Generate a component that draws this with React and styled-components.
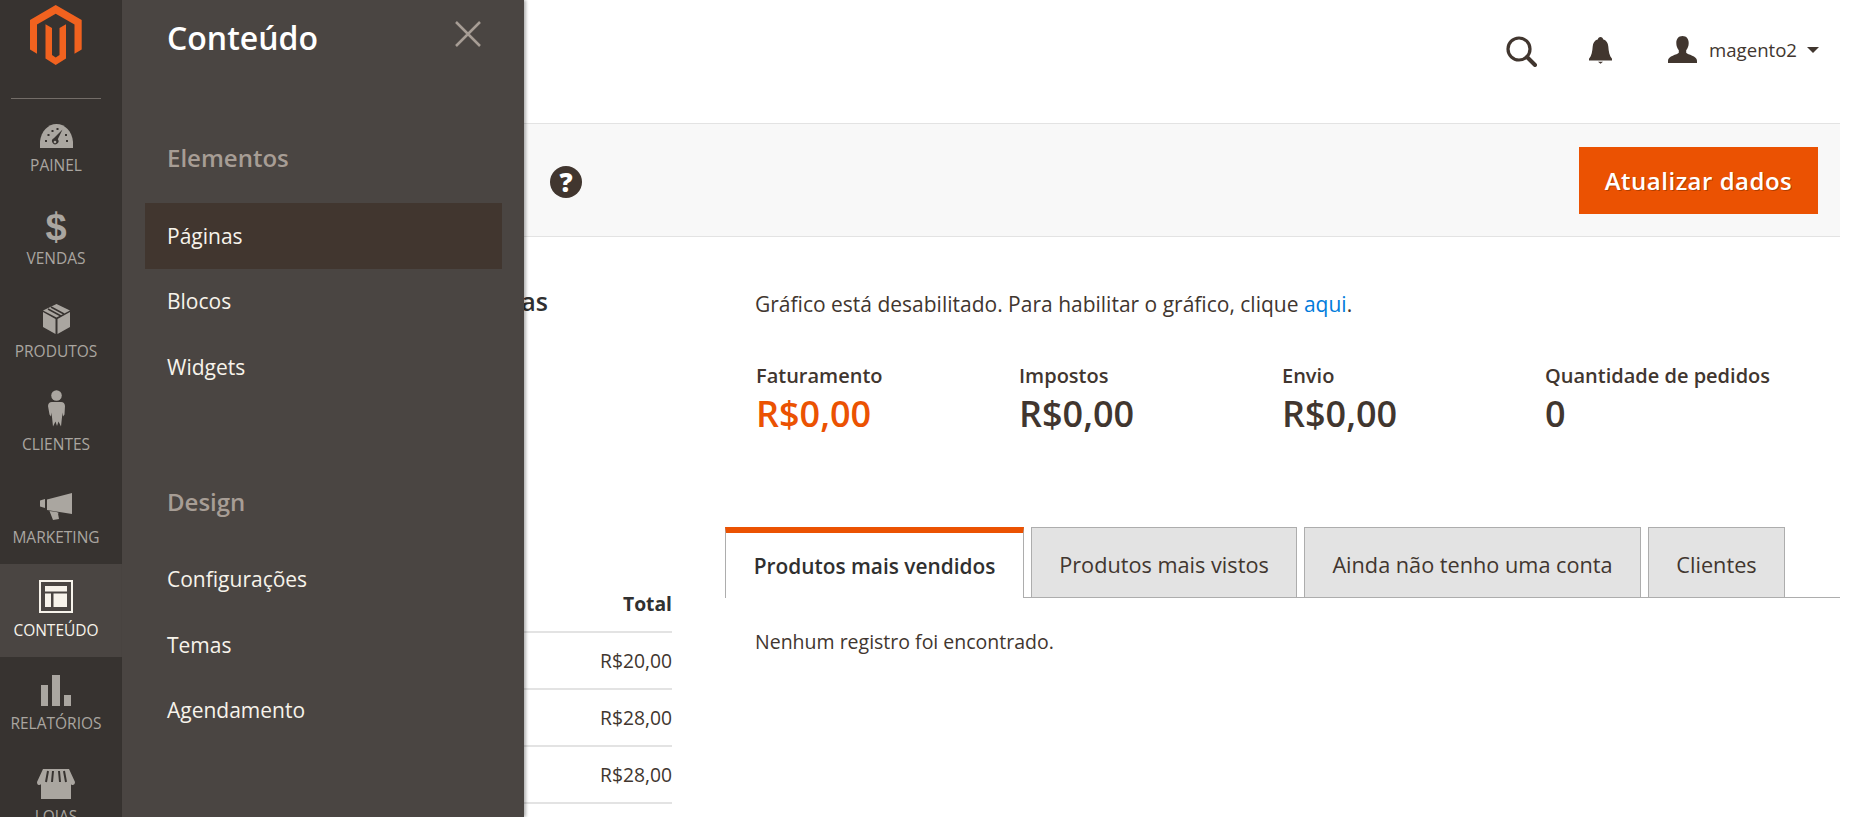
import React from 'react';
import styled, { createGlobalStyle } from 'styled-components';

const GlobalStyle = createGlobalStyle`
  html, body {
    margin: 0;
    padding: 0;
    height: 100%;
    overflow: hidden;
    background: #fff;
    font-family: "Open Sans", "Liberation Sans", sans-serif;
    color: #303030;
  }
  * { box-sizing: border-box; }
`;

const LogoIcon = () => (
  <svg width="52" height="60" viewBox="30 5 52 60">
    <path fill="#f1621f" d="M55.7 5 81.7 20v29.5l-7.2 4.2V24.5L55.7 13.7 37 24.5v29.2L30 49.5V20z" />
    <path fill="#f1621f" d="M45.5 24.3 52 28v27l3.7 2.5 3.8-2.5V28l6.5-3.7v34.2L55.7 65l-10.2-6.5z" />
  </svg>
);

const GaugeIcon = () => (
  <svg width="33" height="24" viewBox="0 0 33 24">
    <path fill="currentColor" d="M0 24v-6.500C1 7.500 8 0 16.500 0S32 7.500 33 17.500V24z" />
    <path fill="#373330" d="M22.500 5.500 17.800 15.200a3.200 3.200 0 1 1-4-.9zM5 16h2v2H5zM7.500 10h2v2h-2zM11.500 6h2v2h-2zM16.500 4h2v2h-2zM26 16h2v2h-2zM25 10h2v2h-2z" />
    <circle cx="15" cy="18" r="1.300" fill="currentColor" />
  </svg>
);

const BoxIcon = () => (
  <svg width="27" height="30" viewBox="0 0 27 30">
    <path fill="currentColor" d="M0 8l12.500 7v15L0 23zM14.500 15 27 8v15l-12.500 7zM13.500 0 27 6.500 13.500 13.500 0 6.500z" />
    <path stroke="#373330" strokeWidth="1.500" d="M8 3l13 7M5 5l13 7" fill="none" />
  </svg>
);

const PersonIcon = () => (
  <svg width="17" height="37" viewBox="0 0 17 37">
    <circle cx="8.500" cy="5.500" r="5.300" fill="currentColor" />
    <path fill="currentColor" d="M4 12h9c2.500 0 3.800 1.500 4 4l-.5 8.500-1.500 2-.5-4-1.500 14-2.500-5-1.500 4.500-1.500-4.500-2.500 5-1.500-14-.5 4-1.500-2L0 16c.2-2.500 1.500-4 4-4z" />
  </svg>
);

const MegaphoneIcon = () => (
  <svg width="32" height="27" viewBox="0 0 32 27">
    <path fill="currentColor" d="M0 7.500l5-1.500v9l-5-1.500zM7 6.500 32 0v21l-25-4zM9.500 18l7 1 2.500 1-1 .5 1 5.500-6 1z" />
  </svg>
);

const LayoutIcon = () => (
  <svg width="34" height="33" viewBox="0 0 34 33">
    <path fill="currentColor" fillRule="evenodd" d="M0 0h34v33H0zM2 2v29h30V2z" />
    <path fill="currentColor" d="M6 6h22v5.500H6zM6 13.500h6V27H6zM14.500 13.500H28V27H14.500z" />
  </svg>
);

const BarsIcon = () => (
  <svg width="30" height="31" viewBox="0 0 30 31">
    <path fill="currentColor" d="M0 10h7v21H0zM11 0h8v31h-8zM23 20h7v11h-7z" />
  </svg>
);

const StoreIcon = () => (
  <svg width="38" height="30" viewBox="0 0 38 30">
    <path fill="currentColor" d="M6 0h26l6 13c0 2-1 3-2.500 3-.7 0-1.300-.4-1.500-1v15H4V15c-.3.700-1.300 1-2.200 1C.8 16 0 15 0 13z" />
    <path stroke="#373330" strokeWidth="2" d="M11 2 9 13M16 2l-1 11M22 2l1 11M27 2l2 11" fill="none" />
  </svg>
);

const SearchIcon = () => (
  <svg width="31" height="31" viewBox="0 0 31 31">
    <circle cx="13" cy="13" r="11" fill="none" stroke="#41362f" strokeWidth="3.200" />
    <path stroke="#41362f" strokeWidth="4" strokeLinecap="round" d="M21 21l8 8" />
  </svg>
);

const BellIcon = () => (
  <svg width="23" height="27" viewBox="0 0 23 27">
    <path fill="#41362f" d="M11.500 0c1.500 0 2.500 1 2.500 2.200 3.500 1 5 3.800 5.300 7.300.4 5 .9 9 3.700 12.300v1.700H0v-1.700c2.800-3.300 3.300-7.300 3.700-12.300C4 6 5.500 3.200 9 2.200 9 1 10 0 11.500 0z" />
    <path fill="#41362f" d="M9 24.800h5l-2.500 2z" />
  </svg>
);

const UserIcon = () => (
  <svg width="29" height="27" viewBox="0 0 29 27">
    <path fill="#41362f" d="M14.500 0c4 0 6.200 2.800 6.200 7 0 3-1 5.500-2.500 7.300v2.500c1.500 2 10.800 3 10.800 8V27H0v-2.200c0-5 9.300-6 10.800-8v-2.500C9.300 12.500 8.300 10 8.300 7c0-4.200 2.200-7 6.200-7z" />
  </svg>
);

const navItems = [
  { label: 'Painel', icon: <GaugeIcon /> },
  { label: 'Vendas', glyph: '$' },
  { label: 'Produtos', icon: <BoxIcon /> },
  { label: 'Clientes', icon: <PersonIcon /> },
  { label: 'Marketing', icon: <MegaphoneIcon /> },
  { label: 'Conteúdo', icon: <LayoutIcon />, active: true },
  { label: 'Relatórios', icon: <BarsIcon /> },
  { label: 'Lojas', icon: <StoreIcon /> },
];

const stats = [
  { label: 'Faturamento', value: 'R$0,00', accent: true },
  { label: 'Impostos', value: 'R$0,00' },
  { label: 'Envio', value: 'R$0,00' },
  { label: 'Quantidade de pedidos', value: '0' },
];

const tabs = [
  { label: 'Produtos mais vendidos', active: true, width: 299 },
  { label: 'Produtos mais vistos', width: 266 },
  { label: 'Ainda não tenho uma conta', width: 337 },
  { label: 'Clientes', width: 137 },
];

const orderTotals = ['R$20,00', 'R$28,00', 'R$28,00', 'R$28,00'];

export default function App() {
  return (
    <>
      <GlobalStyle />
      <Page>
        <Sidebar>
          <LogoBox>
            <LogoIcon />
          </LogoBox>
          <NavList>
            {navItems.map((item) => (
              <NavItem key={item.label} $active={item.active}>
                <NavIcon>
                  {item.glyph ? <DollarGlyph>{item.glyph}</DollarGlyph> : item.icon}
                </NavIcon>
                <NavLabel>{item.label}</NavLabel>
              </NavItem>
            ))}
          </NavList>
        </Sidebar>

        <Main>
          <Header>
            <HeaderIcon $gap={52}>
              <SearchIcon />
            </HeaderIcon>
            <BellSlot>
              <BellIcon />
            </BellSlot>
            <UserMenu>
              <UserIcon />
              <UserName>magento2</UserName>
              <Caret />
            </UserMenu>
          </Header>

          <ActionBar>
            <HelpBadge>?</HelpBadge>
            <PrimaryButton>Atualizar dados</PrimaryButton>
          </ActionBar>

          <Content>
            <LeftColumn>
              <SectionTitle>Vendas vitalícias</SectionTitle>
              <OrdersTable>
                <thead>
                  <tr>
                    <HeadCell>Total</HeadCell>
                  </tr>
                </thead>
                <tbody>
                  {orderTotals.map((total, i) => (
                    <tr key={i}>
                      <BodyCell>{total}</BodyCell>
                    </tr>
                  ))}
                </tbody>
              </OrdersTable>
            </LeftColumn>

            <RightColumn>
              <Notice>
                Gráfico está desabilitado. Para habilitar o gráfico, clique <InlineLink>aqui</InlineLink>.
              </Notice>
              <StatsRow>
                {stats.map((stat) => (
                  <Stat key={stat.label}>
                    <StatLabel>{stat.label}</StatLabel>
                    <StatValue $accent={stat.accent}>{stat.value}</StatValue>
                  </Stat>
                ))}
              </StatsRow>
              <TabStrip>
                {tabs.map((tab) => (
                  <Tab key={tab.label} $active={tab.active} $width={tab.width}>
                    {tab.label}
                  </Tab>
                ))}
              </TabStrip>
              <EmptyText>Nenhum registro foi encontrado.</EmptyText>
            </RightColumn>
          </Content>
        </Main>

        <Flyout>
          <FlyoutHead>
            <FlyoutTitle>Conteúdo</FlyoutTitle>
            <CloseButton>
              <svg width="26" height="26" viewBox="0 0 26 26">
                <path stroke="#a79d95" strokeWidth="2.500" d="M1 1l24 24M25 1 1 25" fill="none" />
              </svg>
            </CloseButton>
          </FlyoutHead>
          <FlyoutGroup>
            <GroupTitle>Elementos</GroupTitle>
            <FlyoutLink $active>Páginas</FlyoutLink>
            <FlyoutLink>Blocos</FlyoutLink>
            <FlyoutLink>Widgets</FlyoutLink>
          </FlyoutGroup>
          <FlyoutGroup>
            <GroupTitle>Design</GroupTitle>
            <FlyoutLink>Configurações</FlyoutLink>
            <FlyoutLink>Temas</FlyoutLink>
            <FlyoutLink>Agendamento</FlyoutLink>
          </FlyoutGroup>
        </Flyout>
      </Page>
    </>
  );
}

const Page = styled.div`
  position: relative;
  display: flex;
  width: 100%;
  height: 817px;
  overflow: hidden;
`;

const Sidebar = styled.aside`
  flex: 0 0 122px;
  background: #373330;
  overflow: hidden;
`;

const LogoBox = styled.div`
  height: 99px;
  margin: 0 21px 0 11px;
  padding-top: 5px;
  display: flex;
  justify-content: center;
  border-bottom: 1px solid #736d68;
`;

const NavList = styled.nav`
  display: flex;
  flex-direction: column;
`;

const NavItem = styled.div`
  flex: 0 0 93px;
  padding-right: 10px;
  display: flex;
  flex-direction: column;
  align-items: center;
  background: ${(p) => (p.$active ? '#4a4542' : 'transparent')};
  color: ${(p) => (p.$active ? '#f7f3eb' : '#aaa6a0')};
`;

const NavIcon = styled.div`
  height: 57px;
  padding-bottom: 8px;
  display: flex;
  align-items: flex-end;
  justify-content: center;
`;

const DollarGlyph = styled.span`
  margin-bottom: -6px;
  font-family: "Liberation Sans", sans-serif;
  font-weight: 700;
  font-size: 38px;
  line-height: 40px;
`;

const NavLabel = styled.div`
  font-size: 15.500px;
  line-height: 18px;
  text-transform: uppercase;
  white-space: nowrap;
`;

const Main = styled.main`
  flex: 1;
  margin-right: 11px;
  min-width: 0;
`;

const Header = styled.header`
  height: 124px;
  padding: 36px 21px 0 0;
  display: flex;
  justify-content: flex-end;
  align-items: flex-start;
  border-bottom: 1px solid #e3e3e3;
`;

const HeaderIcon = styled.div`
  margin-right: ${(p) => p.$gap}px;
  display: flex;
`;

const BellSlot = styled(HeaderIcon)`
  margin-top: 1px;
  margin-right: 56px;
`;

const UserMenu = styled.div`
  display: flex;
  align-items: flex-start;
`;

const UserName = styled.span`
  margin-left: 12px;
  font-size: 18.600px;
  line-height: 28px;
  color: #41362f;
`;

const Caret = styled.span`
  margin: 11px 0 0 10px;
  width: 0;
  height: 0;
  border-left: 6px solid transparent;
  border-right: 6px solid transparent;
  border-top: 6px solid #41362f;
`;

const ActionBar = styled.div`
  height: 113px;
  padding: 23px 22px 0 0;
  display: flex;
  justify-content: space-between;
  align-items: flex-start;
  background: #f8f8f8;
  border-bottom: 1px solid #e3e3e3;
`;

const HelpBadge = styled.div`
  margin: 19px 0 0 428px;
  width: 32px;
  height: 32px;
  border-radius: 50%;
  background: #41362f;
  color: #fff;
  font-size: 26px;
  font-weight: 800;
  line-height: 32px;
  text-align: center;
`;

const PrimaryButton = styled.button`
  width: 239px;
  height: 67px;
  padding: 0;
  border: 0;
  background: #eb5202;
  color: #fff;
  font-family: inherit;
  font-size: 24px;
  font-weight: 600;
  letter-spacing: 0.5px;
  text-shadow: 1px 1px 0 rgba(0, 0, 0, 0.25);
`;

const Content = styled.div`
  padding: 0 0 0 31px;
  display: flex;
  gap: 53px;
`;

const LeftColumn = styled.div`
  flex: 0 0 519px;
  padding-top: 49px;
`;

const SectionTitle = styled.h2`
  width: 395px;
  margin: 0 0 262px;
  font-size: 25px;
  font-weight: 600;
  line-height: 30px;
  text-align: right;
  color: #303030;
`;

const OrdersTable = styled.table`
  width: 100%;
  border-collapse: collapse;
  font-size: 19.300px;
`;

const HeadCell = styled.th`
  height: 54px;
  padding: 0 0 2px;
  font-weight: 700;
  text-align: right;
  color: #303030;
  border-bottom: 2px solid #e3e3e3;
`;

const BodyCell = styled.td`
  height: 57px;
  padding: 0;
  text-align: right;
  color: #41362f;
  border-bottom: 2px solid #e3e3e3;
`;

const RightColumn = styled.div`
  flex: 1;
  min-width: 0;
  padding-top: 55px;
`;

const Notice = styled.p`
  margin: 0 0 0 30px;
  font-size: 21px;
  line-height: 25px;
  color: #41362f;
`;

const InlineLink = styled.span`
  color: #007bdb;
`;

const StatsRow = styled.div`
  margin: 47px 0 0 31px;
  display: grid;
  grid-template-columns: repeat(4, 263px);
`;

const Stat = styled.div`
  display: flex;
  flex-direction: column;
`;

const StatLabel = styled.div`
  font-size: 20px;
  font-weight: 600;
  line-height: 24px;
  color: #41362f;
  white-space: nowrap;
`;

const StatValue = styled.div`
  margin-top: 1px;
  font-size: 36px;
  font-weight: 600;
  line-height: 49px;
  color: ${(p) => (p.$accent ? '#eb5202' : '#41362f')};
`;

const TabStrip = styled.div`
  margin-top: 89px;
  height: 71px;
  display: flex;
  gap: 7px;
  border-bottom: 1px solid #adadad;
`;

const Tab = styled.div`
  flex: 0 0 ${(p) => p.$width}px;
  height: 71px;
  padding-top: 3px;
  display: flex;
  align-items: center;
  justify-content: center;
  font-size: 21.700px;
  color: #41362f;
  background: ${(p) => (p.$active ? '#fff' : '#e3e3e3')};
  border: 1px solid #adadad;
  ${(p) =>
    p.$active &&
    `
    padding-top: 0;
    font-size: 20.850px;
    font-weight: 600;
    color: #303030;
    border-top: 6px solid #eb5202;
    border-bottom: 0;
  `}
`;

const EmptyText = styled.p`
  margin: 31px 0 0 30px;
  font-size: 19.500px;
  line-height: 25px;
  color: #41362f;
`;

const Flyout = styled.section`
  position: absolute;
  top: 0;
  left: 122px;
  bottom: 0;
  width: 402px;
  padding: 0 22px 0 23px;
  background: #4a4542;
  box-shadow: 2px 0 3px rgba(0, 0, 0, 0.3);
`;

const FlyoutHead = styled.div`
  height: 76px;
  padding: 17px 21px 0 22px;
  display: flex;
  justify-content: space-between;
  align-items: flex-start;
`;

const FlyoutTitle = styled.h1`
  margin: 0;
  font-size: 32px;
  font-weight: 600;
  line-height: 42px;
  color: #fff;
`;

const CloseButton = styled.div`
  margin-top: 4px;
  display: flex;
`;

const FlyoutGroup = styled.div`
  padding-top: 65px;
  margin-bottom: 20px;
`;

const GroupTitle = styled.h2`
  margin: 0 0 29px 22px;
  font-size: 24px;
  font-weight: 600;
  line-height: 33px;
  color: #a79d95;
`;

const FlyoutLink = styled.div`
  height: 65.500px;
  padding-left: 22px;
  display: flex;
  align-items: center;
  font-size: 21px;
  color: #f7f3eb;
  background: ${(p) => (p.$active ? '#41362f' : 'transparent')};
`;
